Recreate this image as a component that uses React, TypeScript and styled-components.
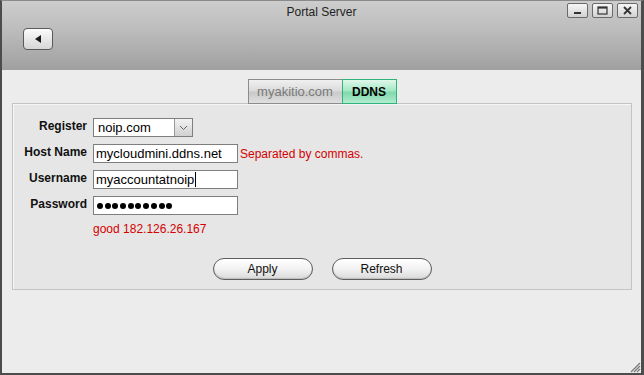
import styled, { createGlobalStyle } from 'styled-components';

const GlobalStyle = createGlobalStyle`
  html, body {
    margin: 0;
    padding: 0;
    background: #ececec;
  }
  body {
    font-family: 'Liberation Sans', Arial, sans-serif;
  }
`;

const Window = styled.div`
  position: relative;
  width: 644px;
  height: 375px;
  box-sizing: border-box;
  display: flex;
  flex-direction: column;
  background: #ececec;
  border-left: 2px solid #4c4c4c;
  border-right: 3px solid #4c4c4c;
  border-bottom: 2px solid #4c4c4c;
  border-top: 1px solid #8a8a8a;
  overflow: hidden;
`;

const TitleBar = styled.div`
  height: 69px;
  flex-shrink: 0;
  box-sizing: border-box;
  background: linear-gradient(#cdcdcd, #bdbdbd 40%, #a0a0a0);
  display: flex;
  flex-direction: column;
`;

const TitleRow = styled.div`
  display: grid;
  grid-template-columns: 1fr auto 1fr;
  align-items: start;
  height: 27px;
`;

const Title = styled.div`
  grid-column: 2;
  font-size: 12px;
  color: #222;
  padding-top: 4px;
`;

const Controls = styled.div`
  grid-column: 3;
  justify-self: end;
  display: flex;
  gap: 4px;
  padding-top: 2px;
  padding-right: 3px;
`;

const CtrlButton = styled.div`
  width: 21px;
  height: 15px;
  box-sizing: border-box;
  border: 1px solid #6a6a6a;
  border-radius: 2px;
  background: linear-gradient(#f6f6f6, #d2d2d2);
  display: flex;
  align-items: center;
  justify-content: center;
`;

const BackButton = styled.div`
  margin-left: 21px;
  width: 30px;
  height: 22px;
  box-sizing: border-box;
  border: 1px solid #5a5a5a;
  border-radius: 4px;
  background: linear-gradient(#fbfbfb, #d6d6d6);
  display: flex;
  align-items: center;
  justify-content: center;
`;

const Body = styled.div`
  flex: 1;
  display: flex;
  flex-direction: column;
  padding: 9px 9px 0 10px;
`;

const TabRow = styled.div`
  display: flex;
  justify-content: center;
  position: relative;
  z-index: 1;
  margin-bottom: -1px;
`;

const Tab = styled.div<{ $active?: boolean }>`
  height: 25px;
  box-sizing: border-box;
  padding: 0 10px;
  display: flex;
  align-items: center;
  justify-content: center;
  font-size: ${(p) => (p.$active ? '12px' : '13px')};
  font-weight: ${(p) => (p.$active ? 'bold' : 'normal')};
  color: ${(p) => (p.$active ? '#000' : '#7a7a7a')};
  border: 1px solid ${(p) => (p.$active ? '#2fb37a' : '#8c8c8c')};
  background: ${(p) =>
    p.$active
      ? 'linear-gradient(#dff7ea, #a6e8c6 45%, #7fd9ab 55%, #b2ecd0)'
      : 'linear-gradient(#f0f0f0, #dcdcdc 45%, #c9c9c9 55%, #e0e0e0)'};
  & + & {
    margin-left: -1px;
  }
`;

const Panel = styled.div`
  height: 187px;
  box-sizing: border-box;
  border: 1px solid #c4c4c4;
  box-shadow: inset 1px 1px 0 #f6f6f6;
  background: #e6e6e6;
  padding: 14px 0 0 0;
  display: flex;
  flex-direction: column;
`;

const Form = styled.div`
  display: grid;
  grid-template-columns: 74px auto;
  column-gap: 6px;
  row-gap: 7px;
  justify-content: start;
  align-items: start;
`;

const Label = styled.div`
  font-size: 12px;
  font-weight: bold;
  color: #111;
  text-align: right;
  white-space: nowrap;
  line-height: 15px;
  padding-top: 1px;
`;

const FieldLine = styled.div`
  display: flex;
  align-items: center;
  gap: 2px;
`;

const Field = styled.div<{ $width?: number }>`
  width: ${(p) => p.$width ?? 145}px;
  height: 19px;
  box-sizing: border-box;
  border: 1px solid #7e7e7e;
  background: #fff;
  font-size: 13px;
  color: #000;
  padding-left: 2px;
  display: flex;
  align-items: center;
  white-space: nowrap;
  overflow: hidden;
`;

const Caret = styled.span`
  display: inline-block;
  width: 1px;
  height: 15px;
  background: #000;
  margin-left: 1px;
`;

const Dots = styled.div`
  display: flex;
  gap: 1.7px;
  padding-left: 1px;
`;

const Dot = styled.span`
  width: 6px;
  height: 6px;
  border-radius: 50%;
  background: #000;
`;

const Select = styled.div`
  width: 100px;
  height: 19px;
  box-sizing: border-box;
  border: 1px solid #7e7e7e;
  background: #fff;
  display: flex;
  font-size: 13px;
`;

const SelectText = styled.div`
  flex: 1;
  padding-left: 4px;
  display: flex;
  align-items: center;
`;

const SelectArrow = styled.div`
  width: 17px;
  border-left: 1px solid #9a9a9a;
  background: linear-gradient(#f2f2f2, #d0d0d0);
  display: flex;
  align-items: center;
  justify-content: center;
`;

const Note = styled.span`
  font-size: 12px;
  color: #d40000;
  white-space: nowrap;
`;

const Status = styled(Note)`
  grid-column: 2;
  margin-top: 0;
`;

const ButtonRow = styled.div`
  display: flex;
  justify-content: center;
  gap: 19px;
  margin-top: 22px;
`;

const PillButton = styled.div`
  width: 100px;
  height: 22px;
  box-sizing: border-box;
  border: 1px solid #5e5e5e;
  border-radius: 11px;
  background: linear-gradient(#ffffff, #f2f2f2 50%, #d9d9d9);
  box-shadow: inset 0 -1px 1px #bdbdbd;
  display: flex;
  align-items: center;
  justify-content: center;
  font-size: 12px;
  color: #111;
`;

const Grip = styled.svg`
  position: absolute;
  right: 0;
  bottom: 0;
`;

export default function App() {
  return (
    <>
      <GlobalStyle />
      <Window>
        <TitleBar>
          <TitleRow>
            <Title>Portal Server</Title>
            <Controls>
              <CtrlButton>
                <svg width="9" height="9" viewBox="0 0 9 9">
                  <rect x="1" y="6" width="7" height="2" fill="#333" />
                </svg>
              </CtrlButton>
              <CtrlButton>
                <svg width="11" height="9" viewBox="0 0 11 9">
                  <rect x="1" y="1" width="9" height="7" fill="none" stroke="#333" strokeWidth="1.2" />
                  <rect x="1" y="1" width="9" height="1.6" fill="#333" />
                </svg>
              </CtrlButton>
              <CtrlButton>
                <svg width="9" height="9" viewBox="0 0 9 9">
                  <path d="M1 1 L8 8 M8 1 L1 8" stroke="#333" strokeWidth="1.8" />
                </svg>
              </CtrlButton>
            </Controls>
          </TitleRow>
          <BackButton>
            <svg width="10" height="10" viewBox="0 0 10 10">
              <path d="M2 5 L8 1 L8 9 Z" fill="#1a1a1a" />
            </svg>
          </BackButton>
        </TitleBar>

        <Body>
          <TabRow>
            <Tab style={{ width: 95 }}>myakitio.com</Tab>
            <Tab $active style={{ width: 55 }}>DDNS</Tab>
          </TabRow>
          <Panel>
            <Form>
              <Label>Register</Label>
              <Select>
                <SelectText>noip.com</SelectText>
                <SelectArrow>
                  <svg width="9" height="6" viewBox="0 0 9 6">
                    <path d="M1 1 L4.5 4.5 L8 1" fill="none" stroke="#666" strokeWidth="1" />
                  </svg>
                </SelectArrow>
              </Select>

              <Label>Host Name</Label>
              <FieldLine>
                <Field>mycloudmini.ddns.net</Field>
                <Note>Separated by commas.</Note>
              </FieldLine>

              <Label>Username</Label>
              <Field>
                myaccountatnoip
                <Caret />
              </Field>

              <Label>Password</Label>
              <Field>
                <Dots>
                  {Array.from({ length: 10 }).map((_, i) => (
                    <Dot key={i} />
                  ))}
                </Dots>
              </Field>

              <Status>good 182.126.26.167</Status>
            </Form>
            <ButtonRow>
              <PillButton>Apply</PillButton>
              <PillButton>Refresh</PillButton>
            </ButtonRow>
          </Panel>
        </Body>

        <Grip width="12" height="12" viewBox="0 0 12 12">
          <path d="M11 2 L2 11 M11 5 L5 11 M11 8 L8 11" stroke="#777" strokeWidth="1.2" />
        </Grip>
      </Window>
    </>
  );
}
